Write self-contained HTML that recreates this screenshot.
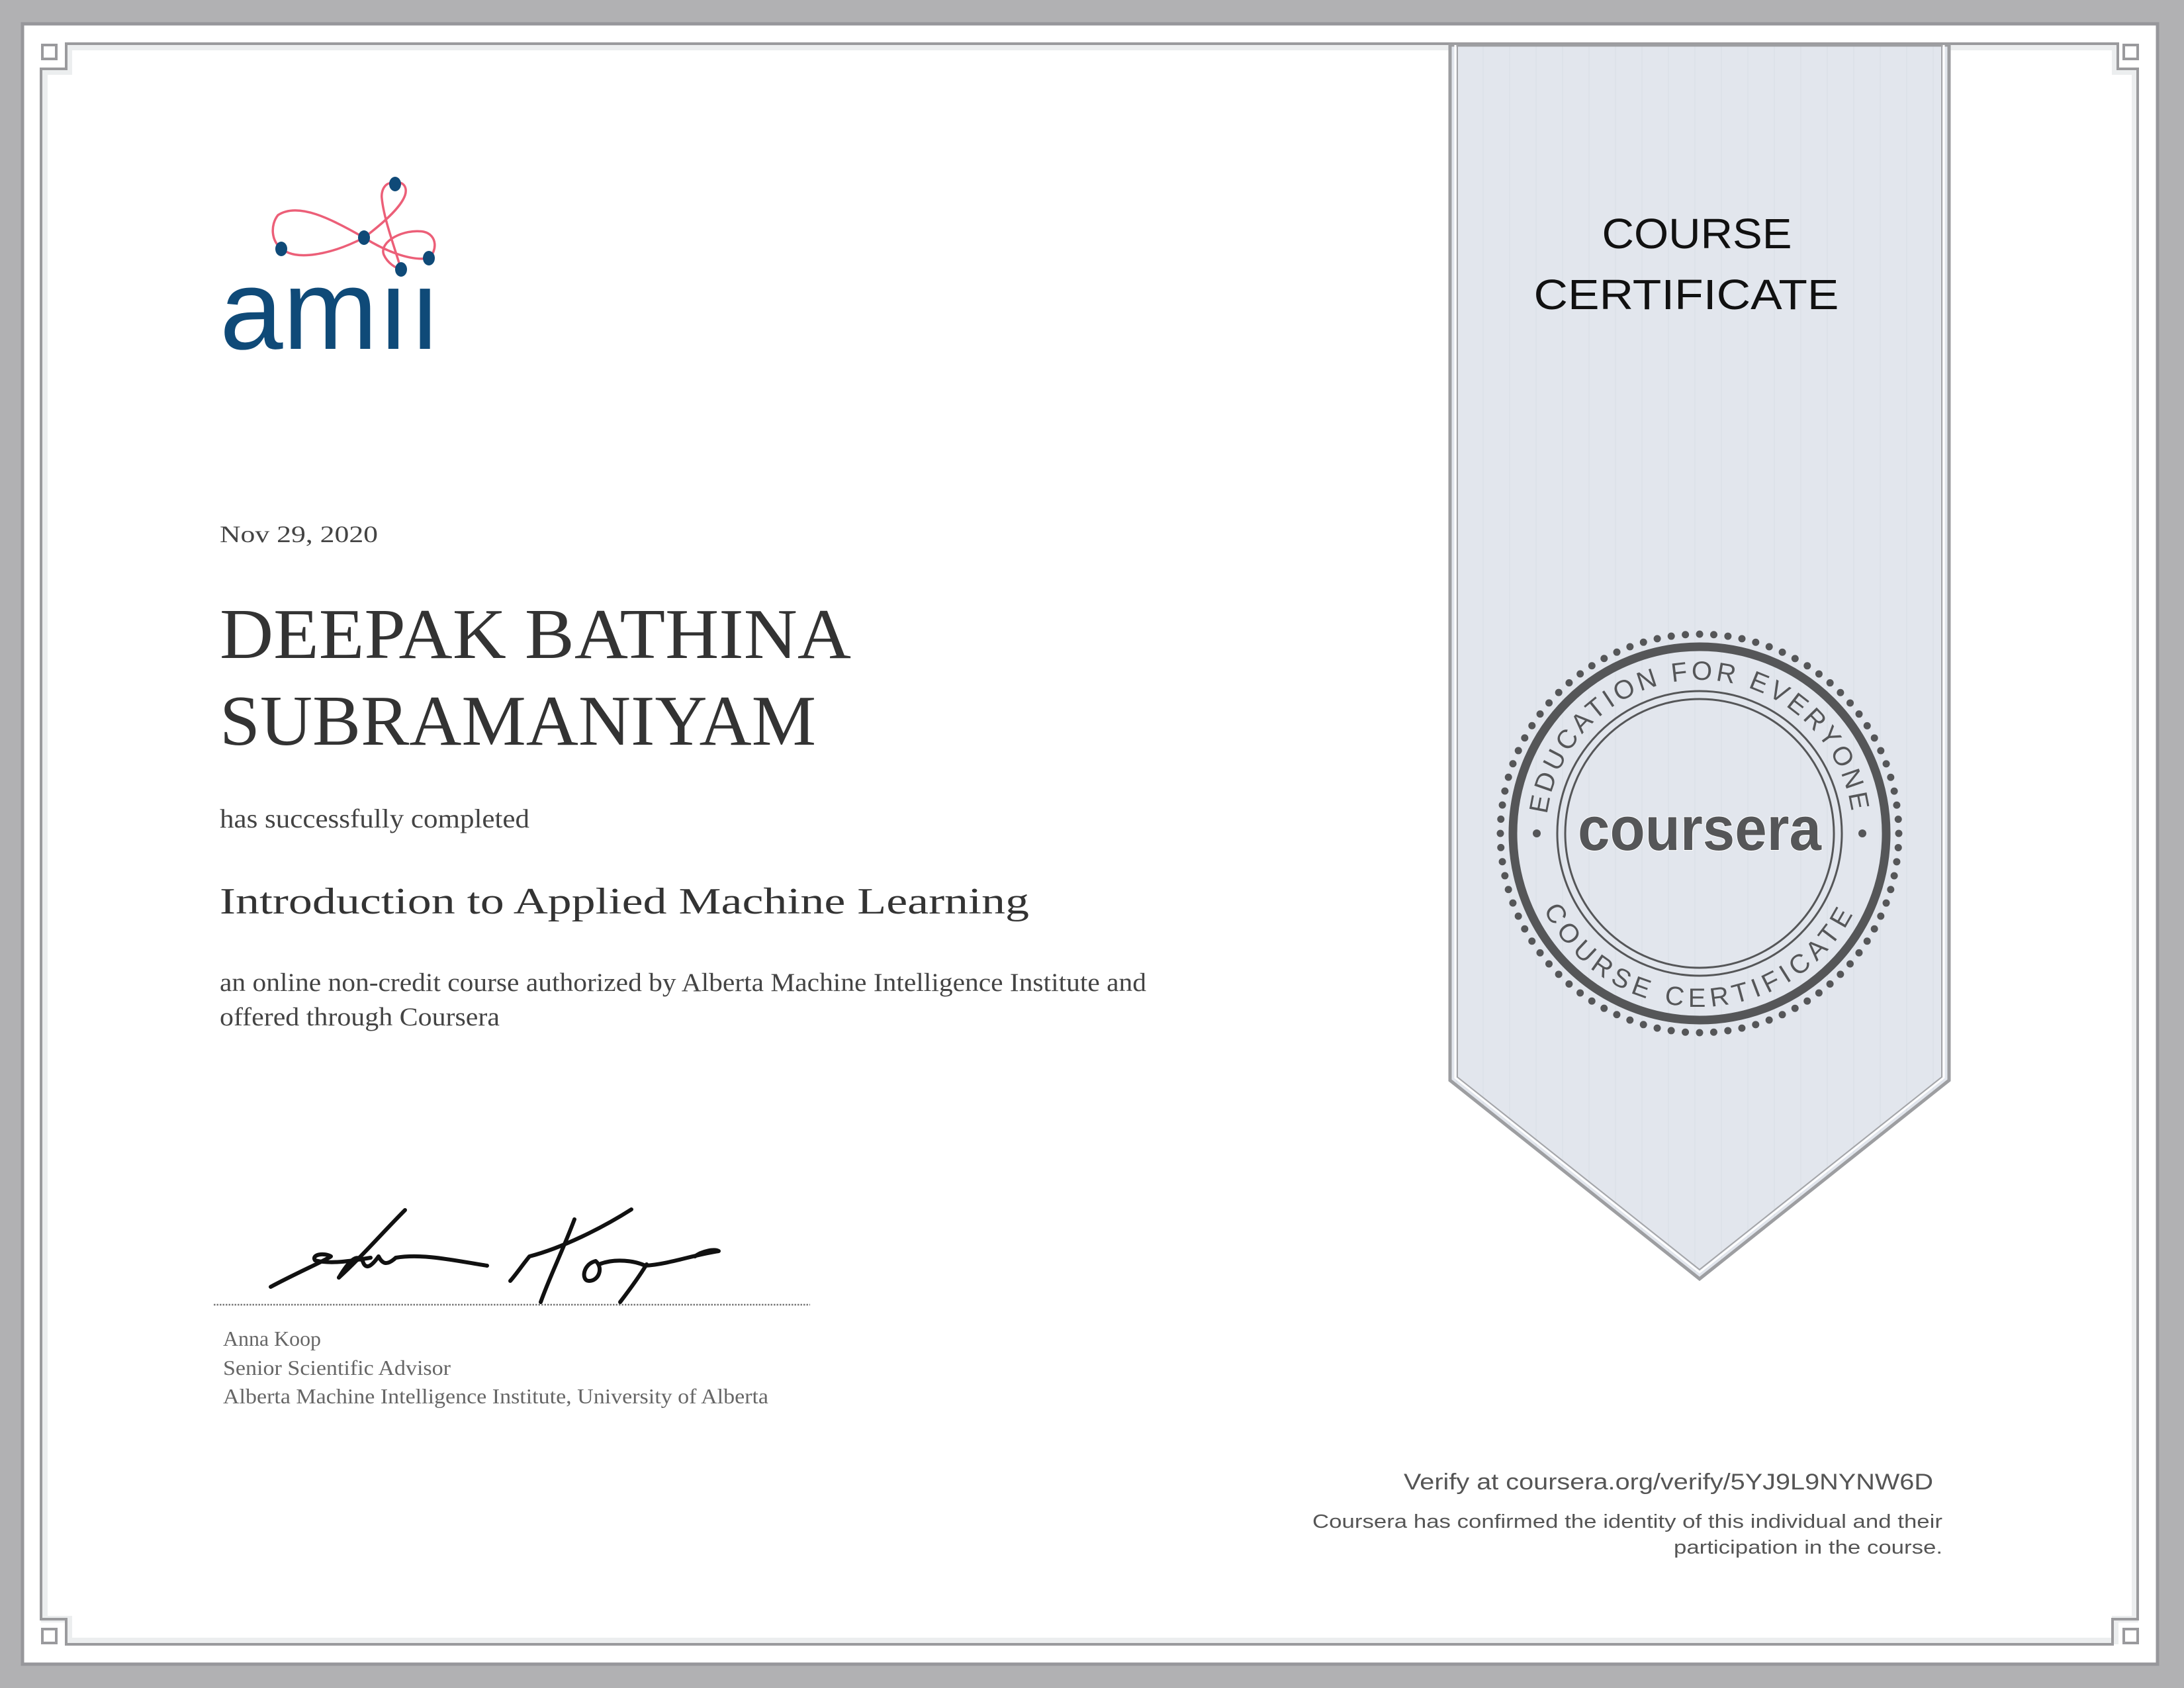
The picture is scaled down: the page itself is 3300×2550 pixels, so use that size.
<!DOCTYPE html>
<html><head><meta charset="utf-8"><style>
html,body{margin:0;padding:0;background:#b1b1b3;}
svg{display:block;}
</style></head><body>
<svg width="3300" height="2550" viewBox="0 0 3300 2550" xmlns="http://www.w3.org/2000/svg">
<defs>
<pattern id="stripes" width="40" height="40" patternUnits="userSpaceOnUse">
<rect width="40" height="40" fill="#e2e6ed"/>
<rect x="0" width="2" height="40" fill="#dde2e9"/>
</pattern>
</defs>
<rect width="3300" height="2550" fill="#b1b1b3"/>
<rect x="34" y="36" width="3226" height="2478" fill="#ffffff" stroke="#97979b" stroke-width="5"/>
<!-- inner frame shadow -->
<path d="M104,71 H3196 V108 H3226 V2446 H3196 V2479 H104 V2446 H67 V108 H104 Z" fill="none" stroke="#eceeef" stroke-width="10"/>
<path d="M100,66 H3200 V104 H3230 V2446 H3192 V2484 H100 V2446 H62 V104 H100 Z" fill="none" stroke="#9a9a9d" stroke-width="4"/>
<rect x="64" y="68" width="21" height="21" fill="none" stroke="#9a9a9d" stroke-width="4"/>
<rect x="3209" y="68" width="21" height="21" fill="none" stroke="#9a9a9d" stroke-width="4"/>
<rect x="64" y="2461" width="21" height="21" fill="none" stroke="#9a9a9d" stroke-width="4"/>
<rect x="3209" y="2461" width="21" height="21" fill="none" stroke="#9a9a9d" stroke-width="4"/>

<!-- ribbon -->
<path d="M2191,68 H2945 V1632 L2568,1932 L2191,1632 Z" fill="url(#stripes)" stroke="#9d9ea1" stroke-width="5"/>
<path d="M2199,68 V1628 L2568,1922 L2937,1628 V68" fill="none" stroke="#ffffff" stroke-width="3"/>
<path d="M2202,68 V1627 L2568,1918 L2934,1627 V68" fill="none" stroke="#a4a5a8" stroke-width="2"/>
<text x="2564" y="375" font-family="Liberation Sans, sans-serif" font-size="64" fill="#111" text-anchor="middle" textLength="287" lengthAdjust="spacingAndGlyphs">COURSE</text>
<text x="2548" y="467" font-family="Liberation Sans, sans-serif" font-size="64" fill="#111" text-anchor="middle" textLength="461" lengthAdjust="spacingAndGlyphs">CERTIFICATE</text>

<!-- seal -->
<g fill="none" stroke="#555658">
<circle cx="2568" cy="1259" r="301" stroke-width="11" stroke-linecap="round" stroke-dasharray="0 21.49"/>
<circle cx="2568" cy="1259" r="282" stroke-width="13"/>
<circle cx="2568" cy="1259" r="215" stroke-width="3"/>
<circle cx="2568" cy="1259" r="203" stroke-width="3"/>
</g>
<circle cx="2322" cy="1259" r="6" fill="#555658"/>
<circle cx="2814" cy="1259" r="6" fill="#555658"/>
<path id="topArc" d="M2336,1259 A232,232 0 0 1 2800,1259" fill="none"/>
<path id="botArc" d="M2306,1259 A262,262 0 0 0 2830,1259" fill="none"/>
<text font-family="Liberation Sans, sans-serif" font-size="40" fill="#555658" letter-spacing="5" text-anchor="middle"><textPath href="#topArc" startOffset="50%">EDUCATION FOR EVERYONE</textPath></text>
<text font-family="Liberation Sans, sans-serif" font-size="40" fill="#555658" letter-spacing="8" text-anchor="middle"><textPath href="#botArc" startOffset="50%">COURSE CERTIFICATE</textPath></text>
<text x="2568" y="1284" font-family="Liberation Sans, sans-serif" font-weight="bold" font-size="94" fill="#555658" text-anchor="middle" textLength="368" lengthAdjust="spacingAndGlyphs" stroke="#ffffff" stroke-width="2" paint-order="stroke">coursera</text>

<!-- amii logo -->
<g fill="none" stroke="#ec5f78" stroke-width="3.5">
<path d="M550,359 C500,330 450,305 420,325 C408,340 410,365 425,375 C445,395 500,385 550,359"/>
<path d="M550,359 C580,378 620,395 648,390 C660,380 662,355 640,350 C610,345 572,365 580,385 C586,398 598,405 606,407"/>
<path d="M550,359 C575,340 605,315 612,295 C617,280 605,272 597,278 C585,272 575,285 577,300 C580,330 595,370 606,407"/>
</g>
<g fill="#0f4a78">
<ellipse cx="425" cy="376" rx="9" ry="11"/>
<ellipse cx="550" cy="359" rx="9" ry="11"/>
<ellipse cx="597" cy="278" rx="9" ry="11"/>
<ellipse cx="648" cy="390" rx="9" ry="11"/>
<ellipse cx="606" cy="407" rx="9" ry="11"/>
</g>
<text x="332" y="527" font-family="Liberation Sans, sans-serif" font-size="172" fill="#0f4a78" textLength="334" lengthAdjust="spacingAndGlyphs">amıı</text>

<!-- main text -->
<g font-family="Liberation Serif, serif">
<text x="332" y="819" font-size="36" fill="#444" textLength="239" lengthAdjust="spacingAndGlyphs">Nov 29, 2020</text>
<text x="332" y="994" font-size="108" fill="#333" textLength="954" lengthAdjust="spacingAndGlyphs">DEEPAK BATHINA</text>
<text x="332" y="1125" font-size="108" fill="#333" textLength="901" lengthAdjust="spacingAndGlyphs">SUBRAMANIYAM</text>
<text x="332" y="1250" font-size="40" fill="#444" textLength="468" lengthAdjust="spacingAndGlyphs">has successfully completed</text>
<text x="332" y="1380" font-size="56" fill="#333" textLength="1223" lengthAdjust="spacingAndGlyphs">Introduction to Applied Machine Learning</text>
<text x="332" y="1497" font-size="39" fill="#444" textLength="1400" lengthAdjust="spacingAndGlyphs">an online non-credit course authorized by Alberta Machine Intelligence Institute and</text>
<text x="332" y="1549" font-size="39" fill="#444" textLength="423" lengthAdjust="spacingAndGlyphs">offered through Coursera</text>
<text x="337" y="2033" font-size="32" fill="#666" textLength="148" lengthAdjust="spacingAndGlyphs">Anna Koop</text>
<text x="337" y="2077" font-size="32" fill="#666" textLength="344" lengthAdjust="spacingAndGlyphs">Senior Scientific Advisor</text>
<text x="337" y="2120" font-size="32" fill="#666" textLength="824" lengthAdjust="spacingAndGlyphs">Alberta Machine Intelligence Institute, University of Alberta</text>
</g>

<!-- signature -->
<line x1="323" y1="1971" x2="1224" y2="1971" stroke="#777" stroke-width="2.5" stroke-dasharray="2.5 2"/>
<g fill="none" stroke="#111" stroke-width="6" stroke-linecap="round" stroke-linejoin="round">
<path d="M612,1828 C580,1860 545,1900 512,1930"/>
<path d="M409,1944 C450,1922 490,1905 500,1898 C490,1892 470,1895 476,1904 C500,1910 530,1905 560,1900"/>
<path d="M512,1930 C530,1900 540,1895 548,1905 C552,1918 560,1915 572,1898 C578,1910 585,1912 598,1900 C640,1893 690,1905 736,1912"/>
<path d="M868,1842 C850,1890 830,1930 817,1967"/>
<path d="M954,1827 C910,1855 850,1885 800,1898 C790,1910 780,1925 771,1935"/>
<path d="M900,1905 C880,1910 878,1935 890,1935 C905,1935 912,1915 900,1905 M905,1910 C930,1900 960,1905 975,1912"/>
<path d="M977,1910 C965,1930 950,1950 937,1967"/>
<path d="M975,1912 C1010,1910 1050,1895 1086,1890 C1080,1886 1060,1890 1050,1898"/>
</g>

<!-- bottom right text -->
<g font-family="Liberation Sans, sans-serif" fill="#555" text-anchor="end">
<text x="2921" y="2250" font-size="34" textLength="800" lengthAdjust="spacingAndGlyphs">Verify at coursera.org/verify/5YJ9L9NYNW6D</text>
<text x="2935" y="2308" font-size="29" textLength="952" lengthAdjust="spacingAndGlyphs">Coursera has confirmed the identity of this individual and their</text>
<text x="2935" y="2347" font-size="29" textLength="406" lengthAdjust="spacingAndGlyphs">participation in the course.</text>
</g>
</svg>
</body></html>
